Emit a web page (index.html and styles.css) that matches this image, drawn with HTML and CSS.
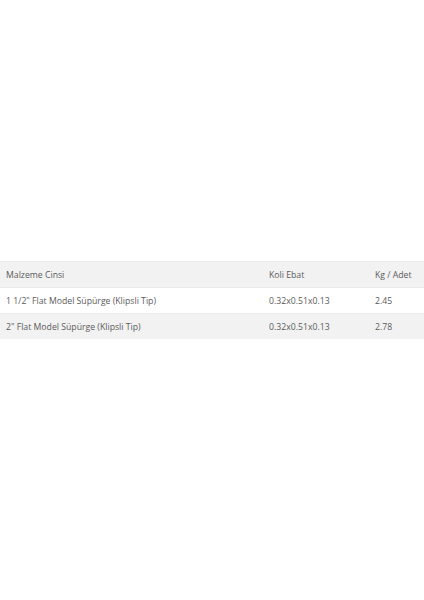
FILE: index.html
```html
<!DOCTYPE html>
<html>
<head>
<meta charset="utf-8">
<link rel="stylesheet" href="styles.css">
</head>
<body>
<div class="page">
<table class="spec">
<thead>
<tr><th class="c1">Malzeme Cinsi</th><th class="c2">Koli Ebat</th><th class="c3">Kg / Adet</th></tr>
</thead>
<tbody>
<tr class="odd"><td>1 1/2" Flat Model Süpürge (Klipsli Tip)</td><td>0.32x0.51x0.13</td><td>2.45</td></tr>
<tr class="even"><td>2" Flat Model Süpürge (Klipsli Tip)</td><td>0.32x0.51x0.13</td><td>2.78</td></tr>
</tbody>
</table>
</div>
</body>
</html>
```
FILE: styles.css
```css
html, body { margin: 0; padding: 0; background: #fff; }
.page { padding-top: 261px; }
.spec {
  width: 100%;
  border-collapse: collapse;
  table-layout: fixed;
  font-family: "Open Sans", sans-serif;
  font-size: 8.7px;
  color: #5a5a5a;
}
.spec th, .spec td {
  text-align: left;
  font-weight: normal;
  height: 25px;
  padding: 0 0 0 6px;
  border-top: 1px solid #ebebeb;
  vertical-align: middle;
  white-space: nowrap;
}
.spec thead tr { background: #f2f2f2; }
.spec .even { background: #f2f2f2; }
.spec .odd { background: #fff; }
.spec .c1 { width: 257px; }
.spec .c2 { width: 100px; }
```
